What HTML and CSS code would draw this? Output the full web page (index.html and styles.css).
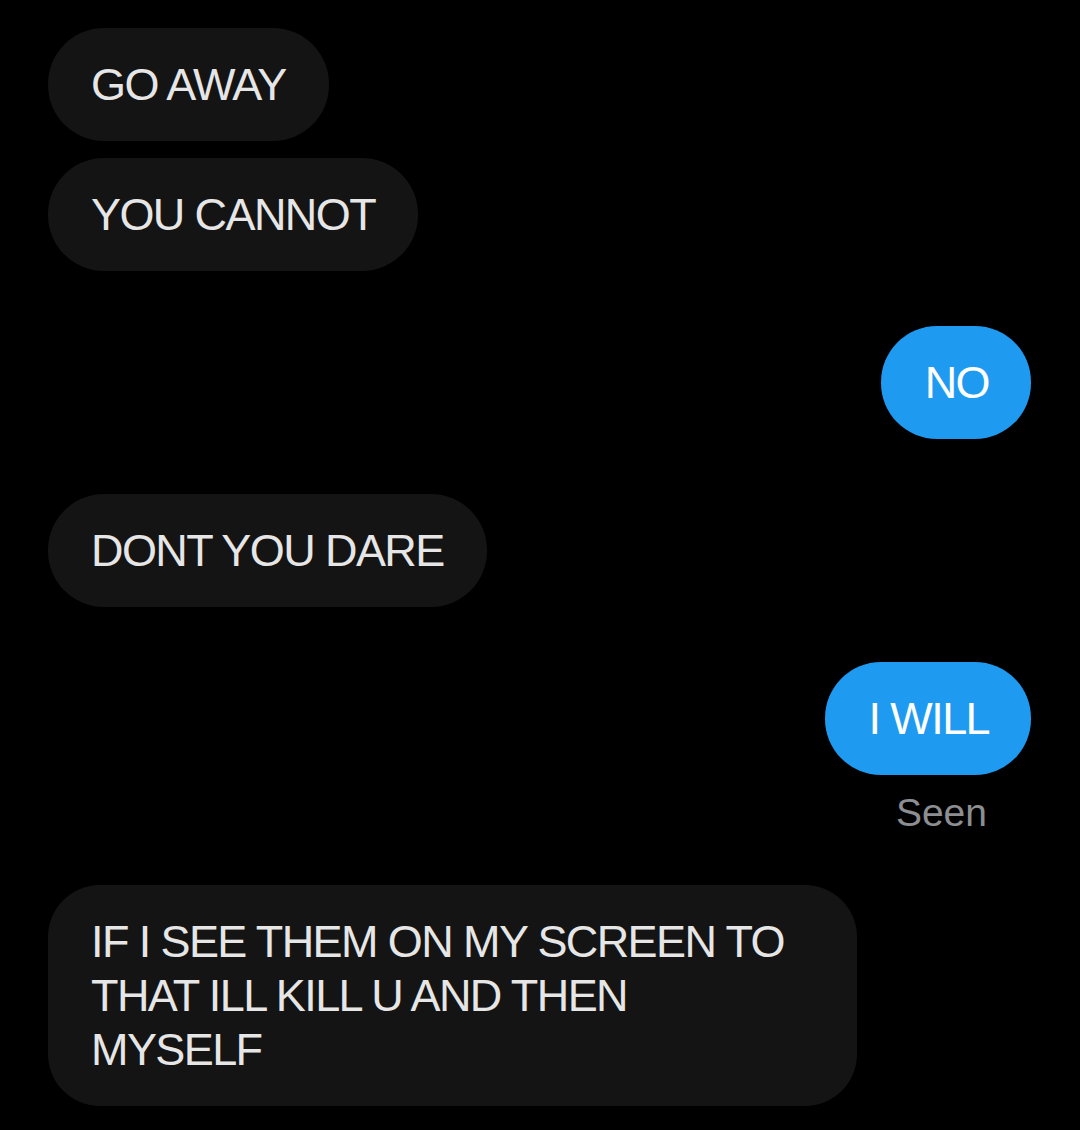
FILE: index.html
```html
<!DOCTYPE html>
<html lang="en">
<head>
  <meta charset="UTF-8">
  <meta name="viewport" content="width=device-width, initial-scale=1.0">
  <title>Messages</title>
  <link rel="stylesheet" href="styles.css">
</head>
<body>
  <div class="thread">
    <div class="msg in">GO AWAY</div>
    <div class="msg in same">YOU CANNOT</div>

    <div class="msg out">NO</div>

    <div class="msg in">DONT YOU DARE</div>

    <div class="msg out">I WILL</div>
    <div class="seen">Seen</div>

    <div class="msg in wide">IF I SEE THEM ON MY SCREEN TO THAT ILL KILL U AND THEN MYSELF</div>
  </div>
</body>
</html>
```

FILE: styles.css
```css
body {
  background: #000;
  margin: 0;
  font-family: 'Liberation Sans', Arial, sans-serif;
}
.thread {
  display: flex;
  flex-direction: column;
  align-items: flex-start;
  padding: 28px 49px 24px 48px;
}
.msg {
  font-size: 45px;
  line-height: 54px;
  letter-spacing: -1.6px;
  padding: 30px 43px 29px 43px;
  border-radius: 56px;
  margin-top: 55px;
  color: #e6e6e6;
  background: #141414;
}
.msg:first-child {
  margin-top: 0;
}
.msg.same {
  margin-top: 17px;
}
.msg.out {
  align-self: flex-end;
  background: #1e9af0;
  color: #fff;
  padding-left: 44px;
  padding-right: 42px;
}
.msg.wide {
  width: 700px;
  padding-right: 66px;
  margin-top: 48px;
  border-radius: 52px;
}
.seen {
  align-self: flex-end;
  font-size: 39px;
  line-height: 48px;
  color: #8c8e92;
  margin-top: 14px;
  padding-right: 44px;
}
```
